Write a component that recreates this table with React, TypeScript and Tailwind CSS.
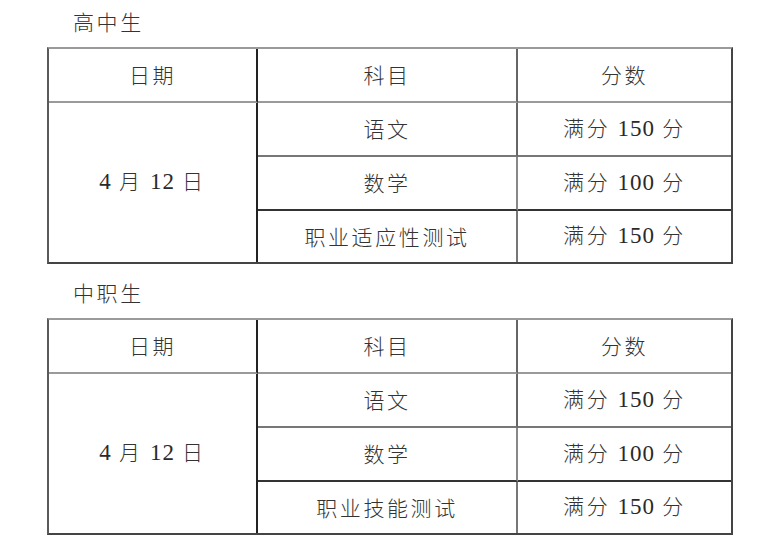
import React from "react";

const cjk = { fontFamily: '"Noto Sans CJK SC", "Noto Sans", sans-serif' };

function Num({ children }: { children: React.ReactNode }) {
  return (
    <span style={{ fontFamily: '"Liberation Serif", "DejaVu Serif", serif' }} className="tracking-[1px] text-[23px] font-normal text-[#2a2a2a]">
      {children}
    </span>
  );
}

function Score({ n }: { n: string }) {
  return (
    <span>
      满分 <Num>{n}</Num> 分
    </span>
  );
}

function Cell({ className, children }: { className?: string; children: React.ReactNode }) {
  return <div className={"flex items-center justify-center " + (className ?? "")}>{children}</div>;
}

function ExamTable({ rows }: { rows: { subject: string; score: string }[] }) {
  return (
    <div className="ml-[47px] w-[686px] border-2 border-t-[#9a9a9a] border-l-[#5a5a5a] border-r-[#444] border-b-[#444]">
      <div className="grid grid-cols-[209px_260px_1fr] grid-rows-[54px_54px_54px_51px]">
        <Cell className="border-r-2 border-r-[#222] border-b-2 border-b-[#9a9a9a]">日期</Cell>
        <Cell className="border-r-2 border-r-[#666] border-b-2 border-b-[#9a9a9a]">科目</Cell>
        <Cell className="border-b-2 border-b-[#9a9a9a]">分数</Cell>
        <Cell className="row-span-3 border-r-2 border-r-[#222]">
          <span>
            <Num>4</Num> 月 <Num>12</Num> 日
          </span>
        </Cell>
        <Cell className="border-r-2 border-r-[#666] border-b-2 border-b-[#777]">{rows[0].subject}</Cell>
        <Cell className="border-b-2 border-b-[#777]">
          <Score n={rows[0].score} />
        </Cell>
        <Cell className="border-r-2 border-r-[#888] border-b-2 border-b-[#333]">{rows[1].subject}</Cell>
        <Cell className="border-b-2 border-b-[#333]">
          <Score n={rows[1].score} />
        </Cell>
        <Cell className="border-r-2 border-r-[#777]">{rows[2].subject}</Cell>
        <Cell>
          <Score n={rows[2].score} />
        </Cell>
      </div>
    </div>
  );
}

export default function App() {
  return (
    <div
      style={cjk}
      className="w-[780px] h-[542px] bg-white text-[#333] text-[21px] tracking-[2.6px] font-light overflow-hidden"
    >
      <div className="h-[47px] pl-[73px] pt-[6px] leading-[30px]">高中生</div>
      <ExamTable
        rows={[
          { subject: "语文", score: "150" },
          { subject: "数学", score: "100" },
          { subject: "职业适应性测试", score: "150" },
        ]}
      />
      <div className="h-[54px] pl-[73px] pt-[13px] leading-[30px]">中职生</div>
      <ExamTable
        rows={[
          { subject: "语文", score: "150" },
          { subject: "数学", score: "100" },
          { subject: "职业技能测试", score: "150" },
        ]}
      />
    </div>
  );
}
